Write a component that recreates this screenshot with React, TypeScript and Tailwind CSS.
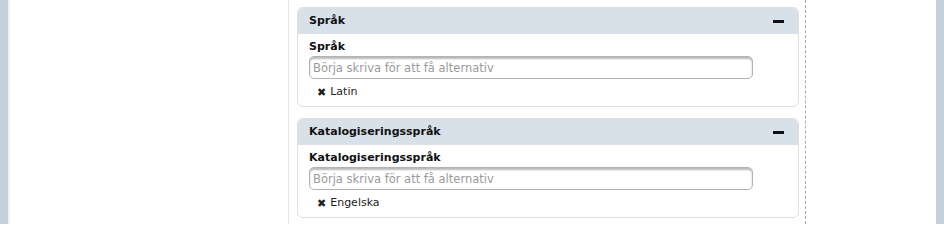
import React from "react";

interface PanelProps {
    title: string;
    label: string;
    value: string;
}

const Panel: React.FC<PanelProps> = ({ title, label, value }) => {
    return (
        <div className="w-[502px] border border-[#dedede] rounded-[6px] overflow-hidden bg-white">
            <div className="h-[26px] bg-[#d8e1ea] flex items-center justify-between pl-[11px] pr-[14px]">
                <span className="font-bold text-[11px] text-[#111]">{ title }</span>
                <span className="block w-[11px] h-[3px] bg-[#111]" />
            </div>
            <div className="pl-[11px] pt-[5px] pb-[6px]">
                <div className="font-bold text-[11px] text-[#111] leading-[16px]">{ label }</div>
                <input
                    className="mt-[1px] block w-[444px] h-[23px] rounded-[5px] border border-[#b3b3b3] shadow-[inset_0_2px_2px_rgba(0,0,0,0.28)] px-[3px] text-[11.5px] outline-none placeholder:text-[#9a9a9a]"
                    placeholder="Börja skriva för att få alternativ"
                />
                <div className="flex items-center gap-[4px] pl-[8px] mt-[5px] h-[16px] text-[11px] text-[#222]">
                    <span className="text-[11px] font-bold leading-none">✖</span>
                    <span>{ value }</span>
                </div>
            </div>
        </div>
    )
}

export default function App() {
    return (
        <div className="w-[944px] h-[224px] flex bg-white overflow-hidden" style={{ fontFamily: '"DejaVu Sans", Verdana, sans-serif' }}>
            <div className="w-[8px] bg-[#c4d1dc]" />
            <div className="w-[3px] bg-gradient-to-r from-[#e6ecf1] to-white" />
            <div className="w-[278px] border-r border-[#e4e4e4]" />
            <div className="flex-1 flex">
                <div className="pl-[8px] pr-[6px] border-r border-dashed border-[#a9a9a9]">
                    <div className="flex flex-col gap-[11px] pt-[7px]">
                        <Panel title="Språk" label="Språk" value="Latin" />
                        <Panel title="Katalogiseringsspråk" label="Katalogiseringsspråk" value="Engelska" />
                    </div>
                </div>
                <div className="flex-1" />
            </div>
            <div className="w-[8px] bg-[#c4d1dc]" />
        </div>
    )
}
